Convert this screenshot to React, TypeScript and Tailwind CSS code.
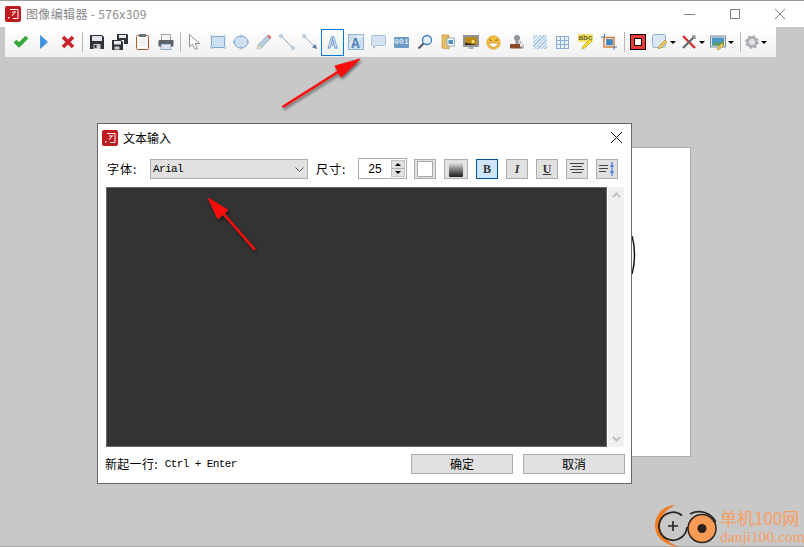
import React from 'react'

const cjk = { fontFamily: '"Noto Sans CJK SC", sans-serif' }

const AppLogo = () => (
  <svg width="16" height="16" viewBox="0 0 16 16">
    <rect x="0" y="0" width="16" height="16" rx="2" fill="#c01a1e" />
    <path d="M5 3.500h8v9H8" fill="none" stroke="#fff" strokeWidth="1" />
    <path d="M10.500 5.500L7 10M7 6h3.500" fill="none" stroke="#fff" strokeWidth="1" />
    <rect x="3" y="11" width="1.500" height="1.500" fill="#fff" />
  </svg>
)

const icons: Record<string, React.ReactNode> = {
  check: (
    <svg width="16" height="14" viewBox="0 0 16 14">
      <path d="M1 7.500L3.500 5l2.500 2.500L12.500 1 15 3.500 6 12.500z" fill="#35a83a" stroke="#1d8a2a" strokeWidth=".5" />
    </svg>
  ),
  play: (
    <svg width="10" height="14" viewBox="0 0 10 14">
      <path d="M1.500 .5L8.500 7 1.500 13.500z" fill="#3a96e4" stroke="#1b6cb4" strokeWidth=".5" />
    </svg>
  ),
  cross: (
    <svg width="14" height="14" viewBox="0 0 14 14">
      <path d="M2 2l10 10M12 2L2 12" stroke="#c8232a" strokeWidth="3.600" />
    </svg>
  ),
  save: (
    <svg width="14" height="14" viewBox="0 0 14 14">
      <path d="M0 0h12l2 2v12H0z" fill="#2f3336" />
      <rect x="2" y="1" width="10" height="5" fill="#dfe5eb" />
      <rect x="3.500" y="9" width="7" height="5" fill="#c8ccd0" />
      <rect x="4.500" y="10" width="2" height="3" fill="#2f3336" />
    </svg>
  ),
  saveAll: (
    <svg width="16" height="16" viewBox="0 0 16 16">
      <path d="M5 0h10l1 1v9h-4V6H5z" fill="#2f3336" />
      <rect x="7" y="1" width="7" height="3" fill="#e8edf2" />
      <path d="M0 6h9l2 2v8H0z" fill="#2f3336" />
      <rect x="2" y="7" width="7" height="3.500" fill="#e8edf2" />
      <rect x="2.500" y="12.500" width="5" height="3" fill="#c8ccd0" />
    </svg>
  ),
  clip: (
    <svg width="13" height="16" viewBox="0 0 13 16">
      <rect x="0.500" y="1.500" width="12" height="14" rx="1" fill="#fff" stroke="#b2552a" />
      <rect x="3" y="0" width="7" height="3" fill="#6b7278" />
      <path d="M3 6h7M3 8.500h7M3 11h7" stroke="#d5dade" />
    </svg>
  ),
  print: (
    <svg width="16" height="16" viewBox="0 0 16 16">
      <rect x="3.500" y="0.500" width="9" height="6" fill="#f2f4f6" stroke="#a0a5aa" />
      <rect x="0.500" y="6" width="15" height="6.500" rx="1" fill="#5c6166" />
      <rect x="3" y="10" width="10" height="5.500" fill="#dfe6ee" stroke="#4f7fb0" strokeWidth=".6" />
    </svg>
  ),
  pointer: (
    <svg width="11" height="16" viewBox="0 0 11 16">
      <path d="M.5 0.500V13l3-3 2.500 5.500 2.500-1L6 9.500h4.500z" fill="#fff" stroke="#8a8f96" />
    </svg>
  ),
  rect: (
    <svg width="16" height="16" viewBox="0 0 16 16">
      <rect x="1.500" y="2.500" width="13" height="11" fill="#cfe0f2" stroke="#7ea6cf" />
      <g fill="#dce9f6" stroke="#6f9ac8" strokeWidth=".6">
        <circle cx="1.500" cy="2.500" r="1" /><circle cx="14.500" cy="2.500" r="1" />
        <circle cx="1.500" cy="13.500" r="1" /><circle cx="14.500" cy="13.500" r="1" />
      </g>
    </svg>
  ),
  ellipse: (
    <svg width="16" height="16" viewBox="0 0 16 16">
      <ellipse cx="8" cy="8" rx="7" ry="6" fill="#cfe0f2" stroke="#7ea6cf" />
      <g fill="#dce9f6" stroke="#6f9ac8" strokeWidth=".6">
        <circle cx="8" cy="2" r="1" /><circle cx="8" cy="14" r="1" />
        <circle cx="1" cy="8" r="1" /><circle cx="15" cy="8" r="1" />
      </g>
    </svg>
  ),
  pencil: (
    <svg width="16" height="16" viewBox="0 0 16 16">
      <path d="M1 15l1-4L11 2l3 3-9 9z" fill="#b8cde0" stroke="#8294a6" strokeWidth=".6" />
      <path d="M11 2l1.500-1.500 3 3L14 5z" fill="#e86a5a" />
      <path d="M1 15l1-4 3 3z" fill="#f0d9a8" />
    </svg>
  ),
  line: (
    <svg width="16" height="16" viewBox="0 0 16 16">
      <path d="M2 2l12 12" stroke="#8aa8c8" />
      <circle cx="2" cy="2" r="1.400" fill="#e5eef7" stroke="#7a9cc0" strokeWidth=".7" />
      <circle cx="14" cy="14" r="1.400" fill="#e5eef7" stroke="#7a9cc0" strokeWidth=".7" />
    </svg>
  ),
  arrow: (
    <svg width="16" height="16" viewBox="0 0 16 16">
      <path d="M2 2l11 11" stroke="#8aa8c8" />
      <circle cx="2" cy="2" r="1.400" fill="#e5eef7" stroke="#7a9cc0" strokeWidth=".7" />
      <path d="M15 15l-5-1.500 3.500-3.500z" fill="#5a7da2" />
    </svg>
  ),
  textA: <span className="text-[14px] leading-none font-bold text-[#f4f8fc] [-webkit-text-stroke:0.8px_#5f94cd]" style={cjk}>A</span>,
  textBox: (
    <span className="flex h-[16px] w-[16px] items-center justify-center border border-[#8fb2d6] bg-[repeating-linear-gradient(135deg,#bcd2e8_0,#bcd2e8_1px,#f0f5fa_1px,#f0f5fa_2px)]">
      <span className="text-[13px] leading-none font-bold text-[#4d82bb]" style={cjk}>A</span>
    </span>
  ),
  bubble: (
    <svg width="15" height="14" viewBox="0 0 15 14">
      <path d="M1.500 .5h12a1 1 0 0 1 1 1v8a1 1 0 0 1-1 1H5.500l-3 2.500v-2.500h-1a1 1 0 0 1-1-1v-8a1 1 0 0 1 1-1z" fill="#d3e3f2" stroke="#a8bfd5" />
    </svg>
  ),
  counter: (
    <span className="flex h-[11px] w-[15px] items-center justify-center rounded-[1px] bg-[#6b9ac6] font-['Liberation_Mono',monospace] text-[8px] leading-none text-white">001</span>
  ),
  zoom: (
    <svg width="16" height="16" viewBox="0 0 16 16">
      <path d="M7 9l-5.500 5.500" stroke="#555c66" strokeWidth="2.200" />
      <circle cx="10" cy="6" r="4.500" fill="#e6f1fb" stroke="#3e78c8" strokeWidth="1.300" />
    </svg>
  ),
  book: (
    <svg width="14" height="16" viewBox="0 0 14 16">
      <path d="M1 1h7v14l-7-1z" fill="#e9bd62" stroke="#b78a33" strokeWidth=".6" />
      <rect x="6" y="4" width="7.500" height="8" fill="#f7f7f7" stroke="#6d94bd" strokeWidth=".7" />
      <rect x="7.500" y="6" width="4.500" height="4" fill="#4f8cc9" />
    </svg>
  ),
  monitor: (
    <svg width="16" height="15" viewBox="0 0 16 15">
      <rect x="0.500" y="0.500" width="15" height="11" fill="#8d9499" stroke="#70767b" strokeWidth=".6" />
      <rect x="2" y="2" width="12" height="8" fill="#b88a1c" />
      <circle cx="10" cy="6.500" r="1.500" fill="#ffe97a" />
      <path d="M2 7.500l5 1 7 1.500H2z" fill="#3d2e12" />
      <rect x="5.500" y="11.500" width="5" height="2.500" fill="#a6acb1" />
    </svg>
  ),
  smile: (
    <svg width="15" height="15" viewBox="0 0 16 16">
      <circle cx="8" cy="8" r="7.200" fill="#f5bf3a" stroke="#d3902a" strokeWidth=".6" />
      <path d="M3.500 5l2.500 1M12.500 5L10 6" stroke="#7a4a12" />
      <path d="M3.500 8.500h9a4.500 4.500 0 0 1-9 0z" fill="#fff" stroke="#9a5a1a" strokeWidth=".5" />
    </svg>
  ),
  stamp: (
    <svg width="16" height="16" viewBox="0 0 16 16">
      <circle cx="8" cy="4" r="3" fill="#8f959b" />
      <rect x="6.500" y="6" width="3" height="4" fill="#8f959b" />
      <rect x="1" y="10" width="12" height="4.500" rx="1" fill="#8a4a26" />
      <path d="M11 7v7l1.500-1.500 1 2 1-.5-1-2H15z" fill="#fff" stroke="#444" strokeWidth=".4" />
    </svg>
  ),
  hatch: <span className="block h-[14px] w-[14px] bg-[repeating-linear-gradient(135deg,#a8c6e4_0,#a8c6e4_1px,#e3edf6_1px,#e3edf6_2.500px)]" />,
  grid: (
    <svg width="13" height="13" viewBox="0 0 13 13">
      <rect x="0.500" y="0.500" width="12" height="12" fill="#e8f0f8" stroke="#8aaed2" />
      <path d="M4.500 0v13M8.500 0v13M0 4.500h13M0 8.500h13" stroke="#8aaed2" />
    </svg>
  ),
  spell: (
    <span className="relative flex h-[16px] w-[16px] items-start justify-center">
      <span className="rounded-[1px] bg-[#efe36a] px-[1px] font-['Liberation_Sans',sans-serif] text-[8px] leading-[8px] font-bold text-[#6b6420]">abc</span>
      <svg className="absolute top-[3px] left-[3px]" width="12" height="13" viewBox="0 0 12 13">
        <path d="M1 12l1-3 7-7 2 2-7 7z" fill="#f4d52c" stroke="#a68e16" strokeWidth=".5" />
      </svg>
    </span>
  ),
  crop: (
    <svg width="16" height="16" viewBox="0 0 16 16">
      <rect x="3" y="3.500" width="10" height="9.500" fill="none" stroke="#c77f3a" strokeWidth="1.500" />
      <rect x="5.500" y="5.500" width="6" height="5.500" fill="#3c86c8" stroke="#2d5d8a" strokeWidth=".5" />
      <path d="M3.500 0v3M13 13v3M0 3h3M13 13h3" stroke="#3e78c8" />
    </svg>
  ),
  frame: (
    <span className="block h-[16px] w-[16px] border border-black bg-[#f03a36] p-[3px]">
      <span className="block h-full w-full border border-black bg-white" />
    </span>
  ),
  fillPen: (
    <svg width="16" height="16" viewBox="0 0 16 16">
      <rect x="0.500" y="0.500" width="13" height="13" rx="2" fill="#dbe7f4" stroke="#8eb0d4" />
      <path d="M6 15l1-3 6-6 2 2-6 6z" fill="#f0c64a" stroke="#8c7a2c" strokeWidth=".5" />
    </svg>
  ),
  tools: (
    <svg width="16" height="16" viewBox="0 0 16 16">
      <path d="M2 2l12 12" stroke="#d9302c" strokeWidth="2.400" />
      <path d="M14 2L2 14" stroke="#60666c" strokeWidth="2.200" />
      <path d="M11.500 0.500l4 4-2 .5-2.500-2.500z" fill="#8a9096" />
    </svg>
  ),
  picPen: (
    <svg width="16" height="16" viewBox="0 0 16 16">
      <rect x="0.500" y="2" width="15" height="11" fill="#dfe7ee" stroke="#7c8e9e" />
      <rect x="2" y="3.500" width="12" height="8" fill="#4d96c8" />
      <path d="M2 11.500l4-4 3 2 5-3v5z" fill="#5d9d5a" />
      <path d="M7 16l1-3 4-4 2 2-4 4z" fill="#f0c64a" stroke="#8c7a2c" strokeWidth=".5" />
    </svg>
  ),
  gear: (
    <svg width="14" height="14" viewBox="0 0 16 16">
      <circle cx="8" cy="8" r="5" fill="none" stroke="#a8acb0" strokeWidth="3" />
      <circle cx="8" cy="8" r="6.800" fill="none" stroke="#a8acb0" strokeWidth="2" strokeDasharray="2.700 2.640" />
      <circle cx="8" cy="8" r="2.200" fill="#f4f4f4" stroke="#888" strokeWidth=".5" />
    </svg>
  ),
}

const Slot = ({ name, w = 23, active = false }: { name: string; w?: number; active?: boolean }) => (
  <div
    className={`flex h-[27px] shrink-0 items-center justify-center ${active ? 'border border-[#0078d7]' : ''}`}
    style={{ width: w }}
  >
    {icons[name]}
  </div>
)

const CaretSlot = ({ name, w = 29 }: { name: string; w?: number }) => (
  <div className="flex shrink-0 items-center justify-center" style={{ width: w }}>
    {icons[name]}
    <span className="ml-[2px] h-0 w-0 border-x-[3px] border-t-[3px] border-x-transparent border-t-black" />
  </div>
)

const Sep = ({ className }: { className: string }) => <div className={`h-[20px] w-px shrink-0 bg-[#b8b8b8] ${className}`} />

const Toolbar = () => (
  <div className="ml-[5px] flex h-[30px] w-[771px] shrink-0 items-center bg-gradient-to-b from-white to-[#f0f0f0] pl-[4px]">
    <Slot name="check" />
    <Slot name="play" w={24} />
    <Slot name="cross" />
    <Sep className="mr-[2px] ml-[3px]" />
    <Slot name="save" />
    <Slot name="saveAll" />
    <Slot name="clip" />
    <Slot name="print" />
    <Sep className="mr-[2px] ml-[3px]" />
    <Slot name="pointer" />
    <Slot name="rect" />
    <Slot name="ellipse" />
    <Slot name="pencil" />
    <Slot name="line" />
    <Slot name="arrow" />
    <Slot name="textA" active />
    <Slot name="textBox" />
    <Slot name="bubble" />
    <Slot name="counter" />
    <Slot name="zoom" />
    <Slot name="book" />
    <Slot name="monitor" />
    <Slot name="smile" />
    <Slot name="stamp" />
    <Slot name="hatch" />
    <Slot name="grid" />
    <Slot name="spell" />
    <Slot name="crop" />
    <Sep className="mr-[1px] ml-[4px]" />
    <Slot name="frame" />
    <CaretSlot name="fillPen" />
    <CaretSlot name="tools" />
    <CaretSlot name="picPen" />
    <Sep className="ml-[4px]" />
    <CaretSlot name="gear" w={30} />
  </div>
)

const FormatButton = ({ children, active = false }: { children: React.ReactNode; active?: boolean }) => (
  <div
    className={`flex h-[20px] w-[22px] shrink-0 items-center justify-center border ${active ? 'border-[#005499] bg-[#cce4f7]' : 'border-[#adadad] bg-[#e1e1e1]'}`}
  >
    {children}
  </div>
)

const Dialog = () => (
  <div className="absolute top-[123px] left-[97px] flex h-[361px] w-[535px] flex-col border border-[#666] bg-white" style={cjk}>
    <div className="flex h-[27px] shrink-0 items-center pr-[9px] pl-[4px]">
      <AppLogo />
      <span className="ml-[5px] text-[12px] text-black">文本输入</span>
      <svg className="ml-auto" width="11" height="11" viewBox="0 0 11 11">
        <path d="M0 0l11 11M11 0L0 11" stroke="#111" />
      </svg>
    </div>
    <div className="mt-[7px] flex h-[21px] shrink-0 items-end pl-[9px] text-[12px] text-black">
      <span className="w-[43px] shrink-0 self-center tracking-[1px]">字体:</span>
      <div className="flex h-[20px] w-[158px] shrink-0 items-center justify-between border border-[#adadad] bg-[#e1e1e1] px-[2px] font-['Liberation_Mono',monospace] text-[11px] tracking-[-0.6px]">
        Arial
        <svg width="9" height="5" viewBox="0 0 9 5" className="mr-[1px]"><path d="M0.500 0.500l4 4 4-4" fill="none" stroke="#555" /></svg>
      </div>
      <span className="ml-[8px] w-[42px] shrink-0 self-center tracking-[1px]">尺寸:</span>
      <div className="flex h-[21px] w-[49px] shrink-0 items-center border border-[#adadad] bg-white">
        <span className="w-[32px] text-center font-['Liberation_Sans',sans-serif] text-[12px]">25</span>
        <div className="flex h-[17px] w-[14px] flex-col border border-[#c4c4c4] bg-[#e1e1e1]">
          <div className="flex flex-1 items-center justify-center border-b border-[#adadad]">
            <span className="h-0 w-0 border-x-[3px] border-b-[3px] border-x-transparent border-b-black" />
          </div>
          <div className="flex flex-1 items-center justify-center">
            <span className="h-0 w-0 border-x-[3px] border-t-[3px] border-x-transparent border-t-black" />
          </div>
        </div>
      </div>
      <div className="ml-[7px] flex gap-[8px]">
        <FormatButton><span className="block h-[16px] w-[16px] border border-[#aaa] bg-white" /></FormatButton>
        <div className="flex h-[20px] w-[24px] shrink-0 items-center justify-center border border-[#adadad] bg-[#e1e1e1]">
          <span className="block h-[15px] w-[14px] rounded-[1px] bg-gradient-to-b from-[#eee] to-[#222]" />
        </div>
        <FormatButton active><span className="font-['Liberation_Serif',serif] text-[12px] leading-none font-bold text-[#333]">B</span></FormatButton>
        <FormatButton><span className="font-['Liberation_Serif',serif] text-[12px] leading-none font-bold text-[#333] italic">I</span></FormatButton>
        <FormatButton><span className="font-['Liberation_Serif',serif] text-[12px] leading-none font-bold text-[#333] underline">U</span></FormatButton>
        <FormatButton>
          <svg width="14" height="12" viewBox="0 0 14 12"><path d="M0 .5h14M2 3.500h10M0 6.500h14M2 9.500h10" stroke="#444" /></svg>
        </FormatButton>
        <FormatButton>
          <svg width="16" height="14" viewBox="0 0 16 14">
            <path d="M0 3.500h9M0 6.500h9M0 9.500h7" stroke="#444" />
            <path d="M13 0v14" stroke="#2a62d8" />
            <path d="M11 4h4M11 10h4" stroke="#2a62d8" />
          </svg>
        </FormatButton>
      </div>
    </div>
    <div className="mt-[8px] ml-[8px] flex h-[260px] shrink-0">
      <div className="h-full w-[501px] border border-[#666] bg-[#333]" />
      <div className="ml-px flex h-full w-[16px] flex-col items-center justify-between bg-[#f0f0f0] py-[5px]">
        <svg width="9" height="6" viewBox="0 0 9 6"><path d="M1 5l3.500-3.500L8 5" fill="none" stroke="#c0c0c0" strokeWidth="2" /></svg>
        <svg width="9" height="6" viewBox="0 0 9 6"><path d="M1 1l3.500 3.500L8 1" fill="none" stroke="#c0c0c0" strokeWidth="2" /></svg>
      </div>
    </div>
    <div className="mt-[7px] flex h-[20px] shrink-0 items-center pr-[6px] pl-[7px] text-[12px] text-black">
      <span className="tracking-[0.3px]">新起一行:</span>
      <span className="ml-[7px] font-['Liberation_Mono',monospace] text-[11px] tracking-[-0.6px]">Ctrl + Enter</span>
      <div className="ml-auto flex gap-[10px]">
        <div className="flex h-[20px] w-[102px] items-center justify-center border border-[#adadad] bg-[#e1e1e1]">确定</div>
        <div className="flex h-[20px] w-[102px] items-center justify-center border border-[#adadad] bg-[#e1e1e1]">取消</div>
      </div>
    </div>
  </div>
)

const Arrows = () => (
  <svg className="pointer-events-none absolute top-0 left-0" width="804" height="547" viewBox="0 0 804 547">
    <defs>
      <filter id="arrowShadow" x="-30%" y="-30%" width="160%" height="160%">
        <feDropShadow dx="1" dy="2" stdDeviation="1.500" floodColor="#000" floodOpacity=".55" />
      </filter>
    </defs>
    <g fill="#f80d0d" stroke="#f80d0d" filter="url(#arrowShadow)">
      <path d="M282.500 107L341 70" strokeWidth="2.500" />
      <path d="M360 59L335 66 341 77z" />
      <path d="M255 250L222 212" strokeWidth="2.500" />
      <path d="M208 198L218 219 228 210z" />
    </g>
  </svg>
)

const Watermark = () => (
  <div className="absolute top-[503px] left-[654px] flex h-[44px] items-start">
    <svg className="shrink-0" width="66" height="44" viewBox="0 0 66 44">
      <path d="M22 2C9 2 1 12 1 23c0 10 8 19 24 21C13 39 6 32 6 23 6 13 12 6 22 2z" fill="#f47a1f" />
      <path d="M28 12.500A14 14 0 1 0 33 24" fill="none" stroke="#2a2420" strokeWidth="1.800" />
      <path d="M14 23h10M19 18v10" stroke="#2a2420" strokeWidth="1.600" />
      <circle cx="48" cy="25.500" r="14" fill="#f99a55" stroke="#2a2420" strokeWidth="1.500" />
      <path d="M36 11a19 19 0 0 1 26 8" fill="none" stroke="#2a2420" strokeWidth="1.500" />
      <circle cx="48" cy="25.500" r="4.500" fill="#2a2420" />
    </svg>
    <div className="flex flex-col gap-[1px] pt-[5px] whitespace-nowrap text-[#f79e62]">
      <span className="text-[17px] leading-[19px]" style={cjk}>单机100网</span>
      <span className="font-['Liberation_Serif',serif] text-[15.500px] leading-[17px]">danji100.com</span>
    </div>
  </div>
)

export default function App() {
  return (
    <div className="relative flex h-[547px] w-[804px] flex-col overflow-hidden bg-[#c8c8c8]">
      <div className="flex h-[27px] shrink-0 items-center border-t border-[#9c9c9c] bg-white pl-[5px]" style={cjk}>
        <AppLogo />
        <span className="ml-[5px] text-[12px] tracking-[0.35px] text-[#8a8a8a]">图像编辑器 - 576x309</span>
        <div className="ml-auto flex items-center gap-[35px] pr-[19px]">
          <span className="block h-px w-[11px] bg-[#808080]" />
          <span className="block h-[10px] w-[10px] border border-[#808080]" />
          <svg width="10" height="10" viewBox="0 0 10 10"><path d="M0 0l10 10M10 0L0 10" stroke="#808080" /></svg>
        </div>
      </div>
      <Toolbar />
      <div className="mt-auto h-px shrink-0 bg-[#a8a8a8]" />
      <div className="absolute top-[147px] left-[500px] h-[310px] w-[191px] border border-[#aaa] bg-white" />
      <svg className="absolute top-[236px] left-[632px]" width="4" height="38" viewBox="0 0 4 38">
        <path d="M0 0c1.800 6 2.500 13 2.500 19S1.800 32 0 38" fill="none" stroke="#111" strokeWidth="1.500" />
      </svg>
      <Dialog />
      <Arrows />
      <Watermark />
    </div>
  )
}
